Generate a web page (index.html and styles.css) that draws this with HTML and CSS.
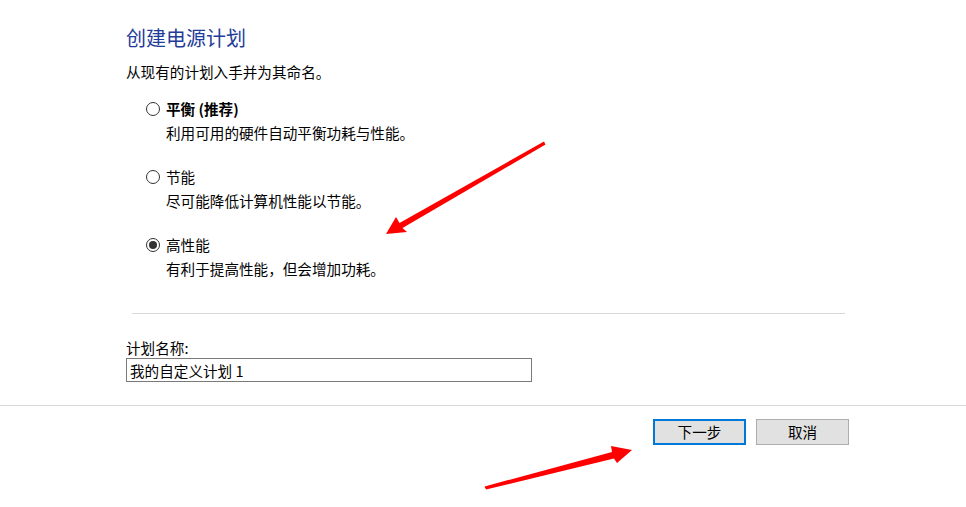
FILE: index.html
```html
<!DOCTYPE html>
<html lang="zh-CN">
<head>
<meta charset="utf-8">
<title>创建电源计划</title>
<link rel="stylesheet" href="styles.css">
</head>
<body>
<div class="page">
  <main class="content">
    <h1 class="title">创建电源计划</h1>
    <p class="subtitle">从现有的计划入手并为其命名。</p>
    <div class="options">
      <div class="option">
        <div class="option-head"><span class="radio"></span><span class="label bold">平衡 (推荐)</span></div>
        <div class="desc">利用可用的硬件自动平衡功耗与性能。</div>
      </div>
      <div class="option">
        <div class="option-head"><span class="radio"></span><span class="label">节能</span></div>
        <div class="desc">尽可能降低计算机性能以节能。</div>
      </div>
      <div class="option">
        <div class="option-head"><span class="radio checked"></span><span class="label">高性能</span></div>
        <div class="desc">有利于提高性能，但会增加功耗。</div>
      </div>
    </div>
    <hr class="sep">
    <div class="field">
      <div class="field-label">计划名称:</div>
      <input class="field-input" type="text" value="我的自定义计划 1">
    </div>
  </main>
  <footer class="footer">
    <button class="btn default">下一步</button>
    <button class="btn">取消</button>
  </footer>
  <svg class="annotations" width="966" height="507" viewBox="0 0 966 507">
    <polygon fill="#ff0000" points="544,141.5 399.5,223 396,217 386,234 407,232 402.5,228 545.5,144.5"/>
    <polygon fill="#ff0000" points="484.5,486.5 612,452 611,446 632,450 617,463 614,458.5 486,489.5"/>
  </svg>
</div>
</body>
</html>
```

FILE: styles.css
```css
html, body {
  margin: 0;
  padding: 0;
  background: #ffffff;
}
body {
  font-family: "Noto Sans CJK SC", "Noto Sans", "Liberation Sans", sans-serif;
  color: #000000;
  font-size: 14.6px;
}
.page {
  position: relative;
  width: 966px;
  height: 507px;
  overflow: hidden;
}
.content {
  padding-left: 126px;
  padding-top: 24px;
}
.title {
  margin: 0;
  font-size: 20px;
  line-height: 28px;
  font-weight: normal;
  color: #1f3c99;
}
.subtitle {
  margin: 10px 0 0 0;
  line-height: 20px;
}
.options {
  margin-top: 15px;
  padding-left: 20px;
}
.option {
  margin-bottom: 20px;
}
.option:last-child {
  margin-bottom: 0;
}
.option-head {
  display: flex;
  align-items: center;
  height: 24px;
}
.radio {
  box-sizing: border-box;
  width: 14px;
  height: 14px;
  border: 1px solid #333333;
  border-radius: 50%;
  margin-right: 6px;
  display: flex;
  align-items: center;
  justify-content: center;
  background: #ffffff;
}
.radio.checked::after {
  content: "";
  width: 8px;
  height: 8px;
  border-radius: 50%;
  background: #333333;
}
.label {
  line-height: 24px;
}
.bold {
  font-weight: bold;
}
.desc {
  padding-left: 20px;
  line-height: 24px;
}
.sep {
  margin: 32px 0 0 6px;
  width: 713px;
  border: 0;
  border-top: 1px solid #d9d9d9;
  height: 0;
}
.field {
  margin-top: 24px;
}
.field-label {
  line-height: 20px;
}
.field-input {
  display: block;
  box-sizing: border-box;
  width: 406px;
  height: 24px;
  margin: 0;
  padding: 0 3px;
  border: 1px solid #7a7a7a;
  font-family: inherit;
  font-size: 14.6px;
  color: #000000;
  background: #ffffff;
  outline: none;
}
.footer {
  margin-top: 23px;
  border-top: 1px solid #d9d9d9;
  padding: 13px 117px 0 0;
  display: flex;
  justify-content: flex-end;
  gap: 10px;
}
.btn {
  box-sizing: border-box;
  width: 93px;
  height: 26px;
  margin: 0;
  padding: 0;
  border: 1px solid #adadad;
  background: #e1e1e1;
  font-family: inherit;
  font-size: 14.6px;
  color: #000000;
  line-height: 22px;
}
.btn.default {
  border: 2px solid #0078d7;
}
.annotations {
  position: absolute;
  left: 0;
  top: 0;
  pointer-events: none;
}
```
